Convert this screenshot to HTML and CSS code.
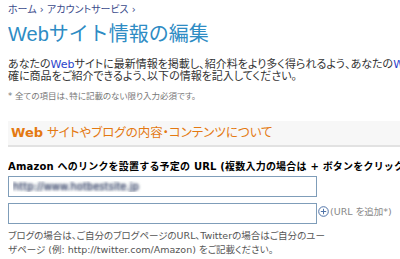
FILE: index.html
```html
<html>
<head>
    <title>Webサイト情報の編集</title>
    <link rel="stylesheet" href="styles.css">
</head>
<body>
    <div class="breadcrumb"><a href="#">ホーム</a> › <a href="#">アカウントサービス</a> ›</div>
    <h1 class="page-title">Webサイト情報の編集</h1>
    <p class="intro">あなたの<span class="en">Web</span>サイトに最新情報を掲載し、紹介料をより多く得られるよう、あなたの<span class="en">Web</span>サイトを通じて、より的<br>確に商品をご紹介できるよう、以下の情報を記入してください。</p>
    <p class="note">* 全ての項目は、特に記載のない限り入力必須です。</p>

    <h2 class="section-title"><b>Web</b> サイトやブログの内容・コンテンツについて</h2>

    <div class="field">
        <label class="field-label">Amazon へのリンクを設置する予定の URL (複数入力の場合は + ボタンをクリックしてください)</label>
        <input type="text" class="url-input filled" value="http://www.hotbestsite.jp">
        <div class="url-row">
            <input type="text" class="url-input">
            <a href="#" class="add-url">
                <svg width="11" height="11" viewBox="0 0 11 11">
                    <circle cx="5.5" cy="5.5" r="4.8" fill="none" stroke="#4f73a8" stroke-width="1"/>
                    <path d="M5.5 2.8v5.4M2.8 5.5h5.4" stroke="#4f73a8" stroke-width="1"/>
                </svg>
                <span>(URL を追加*)</span>
            </a>
        </div>
        <p class="help">ブログの場合は、ご自分のブログページのURL、Twitterの場合はご自分のユー<br>ザページ (例: http://twitter.com/Amazon) をご記載ください。</p>
    </div>
</body>
</html>
```

FILE: styles.css
```css
body {
    font-family: "DejaVu Sans", "Noto Sans CJK JP", sans-serif;
    font-feature-settings: "palt";
    font-size: 11px;
    color: #333;
    margin: 4px 0 0 8px;
    overflow: hidden;
    background: #fff;
}
a { text-decoration: none; }

.breadcrumb {
    font-size: 10px;
    line-height: 12px;
    color: #3b4b8b;
}
.breadcrumb a { color: #3b4b8b; }

.page-title {
    font-family: "Liberation Sans", "Noto Sans CJK JP", sans-serif;
    font-feature-settings: normal;
    font-size: 20px;
    font-weight: normal;
    line-height: 24px;
    color: #2e8cc4;
    margin: 6px 0 0 0;
}

.intro {
    font-size: 11px;
    line-height: 12px;
    white-space: nowrap;
    margin: 13px 0 0 0;
}
.intro .en { color: #2a44cc; }

.note {
    font-size: 8.5px;
    line-height: 12px;
    color: #777;
    margin: 7px 0 0 0;
}

.section-title {
    font-size: 12.5px;
    font-weight: normal;
    line-height: 24px;
    color: #e47911;
    background: #f7f7f7;
    border-bottom: 2px solid #e2e2e2;
    padding: 0 3px;
    margin: 19px 0 0 0;
    white-space: nowrap;
}
.section-title b { font-size: 13px; }

.field { margin-top: 13px; }
.field-label {
    display: block;
    font-size: 10px;
    font-weight: bold;
    font-feature-settings: normal;
    letter-spacing: 0.2px;
    line-height: 14px;
    color: #000;
    white-space: nowrap;
}
.url-input {
    display: block;
    width: 309px;
    height: 21px;
    border: 1px solid #7f9db9;
    padding: 0 4px;
    margin: 2px 0 0 0;
    font-family: "DejaVu Sans", sans-serif;
    font-size: 10px;
    box-sizing: border-box;
    background: #fff;
}
.url-input.filled {
    color: transparent;
    text-shadow: 0 0 3px #55607f, 0 0 3px #55607f;
}
.url-row {
    display: flex;
    align-items: flex-start;
    margin-top: 6px;
}
.url-row .url-input { margin: 0; }
.add-url {
    display: flex;
    align-items: center;
    gap: 1px;
    margin: 1px 0 0 1px;
    font-size: 9.5px;
    color: #888;
}
.add-url svg { display: block; }

.help {
    font-size: 9.5px;
    line-height: 14px;
    color: #555;
    margin: 5px 0 0 0;
    white-space: nowrap;
}
```
